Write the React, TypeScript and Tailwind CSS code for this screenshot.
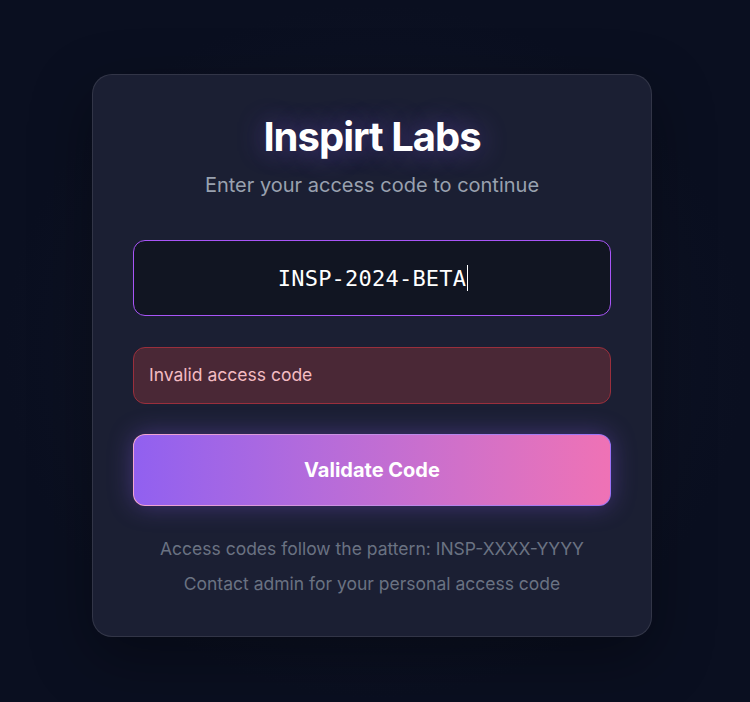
export default function App() {
  return (
    <div className="flex min-h-screen justify-center bg-[#0a0f20] bg-[radial-gradient(ellipse_at_center,#121729_0%,#0a0f20_70%)] pr-[6px] pt-[74px] font-['Inter',sans-serif]">
      <div className="h-fit w-[560px] rounded-[20px] border border-white/10 bg-[#1b1f33] p-10 shadow-[0_20px_60px_rgba(0,0,0,0.35)]">
        <div className="text-center">
          <h1 className="text-[40px] font-bold leading-[44px] tracking-tight text-white [text-shadow:0_0_28px_rgba(139,92,246,0.45)]">
            Inspirt Labs
          </h1>
          <p className="mt-3 text-xl leading-7 text-gray-400">
            Enter your access code to continue
          </p>
        </div>

        <div className="mt-[41px] flex h-[76px] items-center justify-center rounded-xl border border-[#a855f7] bg-[#111522]">
          <span className="ml-[2px] font-['DejaVu_Sans_Mono',monospace] text-[22px] tracking-[0.01em] text-white">
            INSP-2024-BETA
          </span>
          <span className="ml-px h-[26px] w-px bg-white" />
        </div>

        <div className="mt-[31px] flex h-[57px] items-center rounded-xl border border-[#9a2f3c] bg-[#4a2836] px-[15px] text-[17.5px] text-[#f4bcc2]">
          Invalid access code
        </div>

        <div className="mt-[30px] rounded-xl bg-gradient-to-r from-[#f3a5d0] to-[#9a72f5] p-px shadow-[0_0_24px_rgba(139,92,246,0.35)]">
          <button
            type="button"
            className="h-[70px] w-full rounded-[11px] bg-gradient-to-r from-[#9160f0] to-[#ef72b5] text-xl font-bold text-white"
          >
            Validate Code
          </button>
        </div>

        <div className="mt-[31px] text-center text-[17.5px] leading-6 text-gray-500">
          <p>Access codes follow the pattern: INSP-XXXX-YYYY</p>
          <p className="mt-[11px]">Contact admin for your personal access code</p>
        </div>
      </div>
    </div>
  );
}
